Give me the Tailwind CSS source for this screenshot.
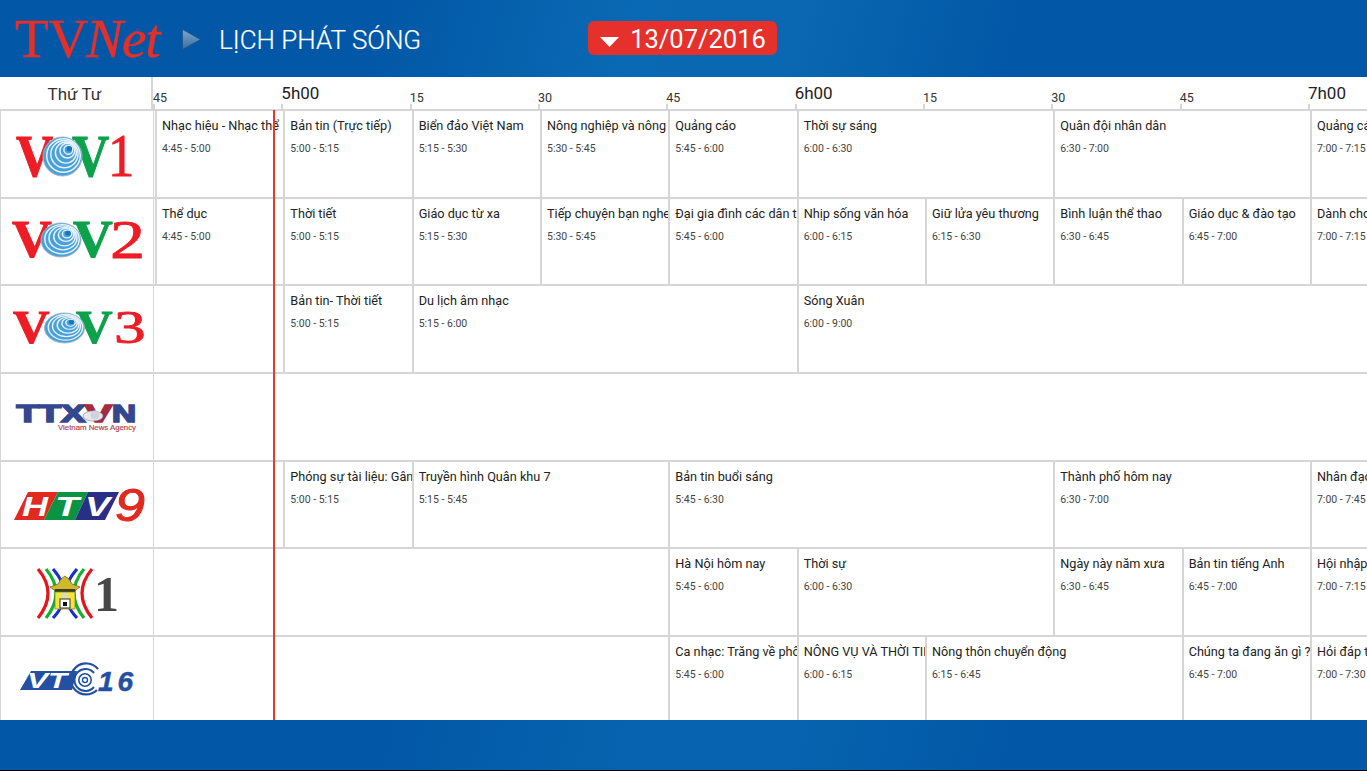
<!DOCTYPE html>
<html lang="vi">

<head>
    <meta charset="UTF-8">
    <meta name="viewport" content="width=device-width, initial-scale=1.0">
    <title>TVNet - Lịch phát sóng</title>
    <script src="https://cdn.jsdelivr.net/npm/@tailwindcss/browser@4"></script>
</head>

<body class="bg-black [font-family:Roboto,sans-serif]">
    <div class="relative w-[1367px] h-[770px] overflow-hidden flex flex-col bg-white">

        <!-- Top bar -->
        <header class="h-[77px] flex-none flex items-center bg-[linear-gradient(105deg,#0258a6_28%,#0a69b4_46%,#0a67b2_58%,#0258a6_74%)]">
            <div class="ml-[15px] w-[145px] whitespace-nowrap [font-family:'Liberation_Serif',serif] text-[55px] leading-[60px] text-[#e5302a] [-webkit-text-stroke:0.5px_#e5302a]">TV<span class="italic -ml-[2px] tracking-[-1px]">Net</span></div>
            <svg class="ml-[22px] mt-[1px]" width="19" height="21" viewBox="0 0 19 21">
                <defs>
                    <linearGradient id="arrow" x1="0" y1="0" x2="0" y2="1">
                        <stop offset="0" stop-color="#7fa8cf" />
                        <stop offset="1" stop-color="#3a6c9c" />
                    </linearGradient>
                </defs>
                <path d="M0.5 0.5 L18.5 10.5 L0.5 20.5 Z" fill="url(#arrow)" stroke="#1f4f86" stroke-width="0.7" />
            </svg>
            <h1 class="ml-[18px] mt-[2px] text-[26px] leading-none font-light text-white [-webkit-text-stroke:0.2px_#fff]">LỊCH PHÁT SÓNG</h1>
            <div class="ml-[167px] -mt-[1px] w-[189px] h-[34px] rounded-[6px] bg-[#e5302c] flex items-center text-white">
                <svg class="ml-[12px] mt-[8px]" width="19" height="10" viewBox="0 0 19 10">
                    <path d="M0 0 H19 L9.5 10 Z" fill="#fff" />
                </svg>
                <span class="ml-[11px] mt-[3px] text-[25.5px] leading-none">13/07/2016</span>
            </div>
        </header>

        <!-- Time ruler -->
        <div id="ruler" class="h-[32px] flex-none flex overflow-hidden bg-white">
            <div class="w-[153px] flex-none pr-[2px] border-r-2 border-[#d6d6d6] text-center text-[17px] leading-[35px] text-[#333]">Thứ Tư</div>
        </div>

        <!-- Channel rows -->
        <div id="rows" class="h-[611px] flex-none overflow-hidden"></div>

        <!-- Now marker -->
        <div class="absolute left-[273px] top-[110px] w-[2px] h-[610px] bg-[#e53935]"></div>

        <!-- Bottom bar -->
        <footer class="h-[50px] flex-none bg-[linear-gradient(105deg,#0258a6_28%,#0763af_46%,#0763af_58%,#0258a6_74%)]"></footer>
    </div>

    <script>
        const QUARTER = 128.33;

        // Globe with rings, shared by the VOV logos
        const rings = function (cx, cy, rx, ry) {
            return `<g transform="translate(${cx} ${cy}) scale(${rx / 20} ${ry / 20})">
                <circle r="20" fill="#4aa0d8" stroke="#9fb4c4" stroke-width="1"/>
                <g fill="none" stroke="#e6f3fb" stroke-width="1.5">
                    <circle cx="1" cy="-1" r="17.2"/>
                    <circle cx="2" cy="-2.5" r="14"/>
                    <circle cx="3.5" cy="-4" r="10.8"/>
                    <circle cx="5" cy="-6" r="7.6"/>
                    <circle cx="6" cy="-7" r="4.6"/>
                </g>
                <circle cx="7" cy="-8" r="2.8" fill="#1576c4"/>
            </g>`;
        };

        const vov = function (num, o) {
            return `<svg width="153" height="86" viewBox="0 0 153 86">
                <g font-family="Liberation Serif" font-weight="700" stroke-width="1">
                    <text transform="translate(${o.redX} ${o.base}) scale(${o.sx} 1)" font-size="${o.size}" fill="#ee1c25" stroke="#ee1c25">V</text>
                    <text transform="translate(${o.greenX} ${o.base}) scale(${o.sx} 1)" font-size="${o.size}" fill="#0ca14a" stroke="#0ca14a">V</text>
                </g>
                ${rings(o.cx, o.cy, o.rx, o.ry)}
                <text transform="translate(${o.numX} ${o.numBase}) scale(${o.numSx} 1)" font-family="Liberation Serif" font-size="${o.numSize}" fill="#ee1c25" stroke="#ee1c25" stroke-width="0.8">${num}</text>
            </svg>`;
        };

        const logos = {
            vov1: vov("1", { redX: 15, greenX: 71, base: 65, size: 60, sx: 0.86, cx: 61.5, cy: 45.5, rx: 19.5, ry: 19.5, numX: 107, numBase: 65, numSize: 62, numSx: 0.85 }),
            vov2: vov("2", { redX: 11, greenX: 72, base: 58, size: 52, sx: 1.06, cx: 60, cy: 41, rx: 20, ry: 17, numX: 109, numBase: 59, numSize: 54, numSx: 1.3 }),
            vov3: vov("3", { redX: 12, greenX: 75, base: 57, size: 46, sx: 1.1, cx: 63.5, cy: 42, rx: 20, ry: 15, numX: 113, numBase: 57, numSize: 46, numSx: 1.38 }),
            ttxvn: `<svg width="153" height="86" viewBox="0 0 153 86">
                <g font-family="Liberation Sans" font-weight="700" font-size="23" stroke-width="1.6">
                    <text x="15.5" y="47.5" textLength="69" lengthAdjust="spacingAndGlyphs" fill="#35478f" stroke="#35478f">TTX</text>
                    <text x="84" y="47.5" textLength="27" lengthAdjust="spacingAndGlyphs" fill="#a8283c" stroke="#a8283c">V</text>
                    <text x="111" y="47.5" textLength="24" lengthAdjust="spacingAndGlyphs" fill="#35478f" stroke="#35478f">N</text>
                </g>
                <ellipse cx="92" cy="42" rx="10" ry="5" fill="#e6e8ee" stroke="#8d95b4" stroke-width="0.7"/>
                <circle cx="94" cy="41" r="4.5" fill="#cfd3de"/>
                <text x="57" y="56" textLength="78" lengthAdjust="spacingAndGlyphs" font-family="Liberation Sans" font-size="6.5" fill="#b3434f" stroke="#b3434f" stroke-width="0.15">Vietnam News Agency</text>
            </svg>`,
            htv9: `<svg width="153" height="86" viewBox="0 0 153 86">
                <path d="M27 30 H57 L43 58 H13 Z" fill="#e0291f"/>
                <path d="M57 30 H87 L74 58 H43 Z" fill="#0b9344"/>
                <path d="M87 30 H118 L104 58 H74 Z" fill="#2a2f86"/>
                <g font-family="Liberation Sans" font-weight="700" font-style="italic" font-size="28" fill="#fff">
                    <text x="21" y="54" textLength="26" lengthAdjust="spacingAndGlyphs">H</text>
                    <text x="54" y="54" textLength="24" lengthAdjust="spacingAndGlyphs">T</text>
                    <text x="84" y="54" textLength="25" lengthAdjust="spacingAndGlyphs">V</text>
                </g>
                <text x="114" y="59" font-family="Liberation Sans" font-style="italic" font-size="46" fill="#e0291f" stroke="#e0291f" stroke-width="1" textLength="30" lengthAdjust="spacingAndGlyphs">9</text>
            </svg>`,
            h1: `<svg width="153" height="86" viewBox="0 0 153 86">
                <g fill="none" stroke-width="3.2">
                    <path d="M37 20 Q57 44 37 69 M91 20 Q71 44 91 69" stroke="#e8141c"/>
                    <path d="M45 20 Q65 44 45 69 M83 20 Q63 44 83 69" stroke="#18b030"/>
                    <path d="M52 20 Q64 34 60 40 M60 50 Q64 56 52 69 M76 20 Q64 34 68 40 M68 50 Q64 56 76 69" stroke="#1a2fd0"/>
                </g>
                <path d="M49 38 L57 35 L60 30 L64 27 L68 30 L71 35 L79 38 L75 41 H53 Z" fill="#cdbb2c" stroke="#5e5a24" stroke-width="0.7"/>
                <rect x="54" y="40" width="20" height="3" fill="#3e3c22"/>
                <rect x="54" y="43" width="20" height="17" fill="#f2e63a" stroke="#7b7428" stroke-width="0.7"/>
                <rect x="61" y="44" width="6" height="5" fill="#d9d9c8"/>
                <rect x="59" y="50" width="10" height="9" fill="#fff" stroke="#333" stroke-width="1"/>
                <rect x="62" y="53" width="4" height="4" fill="#111"/>
                <text x="93" y="62" font-family="Liberation Serif" font-weight="700" font-size="50" fill="#474747">1</text>
            </svg>`,
            vtc16: `<svg width="153" height="86" viewBox="0 0 153 86">
                <path d="M30 34 H76 L71 53 H19 Z" fill="#2450a4"/>
                <g font-family="Liberation Sans" font-weight="700" font-style="italic" font-size="22" fill="#fff">
                    <text x="26" y="51" textLength="21" lengthAdjust="spacingAndGlyphs">V</text>
                    <text x="47" y="51" textLength="19" lengthAdjust="spacingAndGlyphs">T</text>
                </g>
                <g fill="none" stroke="#2450a4" transform="translate(84 43)">
                    <path d="M13 -11 A15.5 15.5 0 1 0 12 10" stroke-width="2.2" />
                    <path d="M9 -7 A11 11 0 1 0 9 7" stroke-width="2" />
                    <circle r="6.2" stroke-width="1.6" />
                    <circle r="2.5" stroke-width="1.4" />
                </g>
                <text x="97" y="54" font-family="Liberation Sans" font-weight="700" font-style="italic" font-size="28" letter-spacing="4" fill="#2450a4" stroke="#2450a4" stroke-width="0.5">16</text>
            </svg>`
        };

        // Start and end are counted in quarters of an hour after 4:45
        const schedule = [
            {
                logo: "vov1", programs: [
                    [0, 1, "Nhạc hiệu - Nhạc thể"], [1, 2, "Bản tin (Trực tiếp)"], [2, 3, "Biển đảo Việt Nam"],
                    [3, 4, "Nông nghiệp và nông thôn"], [4, 5, "Quảng cáo"], [5, 7, "Thời sự sáng"],
                    [7, 9, "Quân đội nhân dân"], [9, 10, "Quảng cáo"]
                ]
            },
            {
                logo: "vov2", programs: [
                    [0, 1, "Thể dục"], [1, 2, "Thời tiết"], [2, 3, "Giáo dục từ xa"], [3, 4, "Tiếp chuyện bạn nghe đài"],
                    [4, 5, "Đại gia đình các dân tộc"], [5, 6, "Nhịp sống văn hóa"], [6, 7, "Giữ lửa yêu thương"],
                    [7, 8, "Bình luận thể thao"], [8, 9, "Giáo dục & đào tạo"], [9, 10, "Dành cho"]
                ]
            },
            {
                logo: "vov3", programs: [
                    [1, 2, "Bản tin- Thời tiết"], [2, 5, "Du lịch âm nhạc"], [5, 17, "Sóng Xuân"]
                ]
            },
            { logo: "ttxvn", programs: [] },
            {
                logo: "htv9", programs: [
                    [1, 2, "Phóng sự tài liệu: Gân guốc"], [2, 4, "Truyền hình Quân khu 7"], [4, 7, "Bản tin buổi sáng"],
                    [7, 9, "Thành phố hôm nay"], [9, 12, "Nhân đạo"]
                ]
            },
            {
                logo: "h1", programs: [
                    [4, 5, "Hà Nội hôm nay"], [5, 7, "Thời sự"], [7, 8, "Ngày này năm xưa"],
                    [8, 9, "Bản tin tiếng Anh"], [9, 10, "Hội nhập"]
                ]
            },
            {
                logo: "vtc16", programs: [
                    [4, 5, "Ca nhạc: Trăng về phố"], [5, 6, "NÔNG VỤ VÀ THỜI TIẾT"], [6, 8, "Nông thôn chuyển động"],
                    [8, 9, "Chúng ta đang ăn gì ?"], [9, 11, "Hỏi đáp thuế"]
                ]
            }
        ];

        const clock = function (quarter) {
            const minutes = 4 * 60 + 45 + quarter * 15;
            const m = minutes % 60;
            return Math.floor(minutes / 60) + ":" + (m < 10 ? "0" + m : m);
        };

        // Ruler labels
        const ruler = document.getElementById("ruler");
        ["45", "5h00", "15", "30", "45", "6h00", "15", "30", "45", "7h00"].forEach(function (label) {
            const isHour = label.indexOf("h") > 0;
            const cell = document.createElement("div");
            cell.className = "flex-none flex flex-col justify-end";
            cell.style.width = QUARTER + "px";
            const text = document.createElement("div");
            text.className = isHour
                ? "mb-[1px] text-[17px] leading-[20px] text-[#222]"
                : "-mb-[2px] text-[12.5px] leading-[16px] text-[#333]";
            text.textContent = label;
            const tick = document.createElement("div");
            tick.className = "w-[2px] h-[5px] bg-[#d6d6d6]";
            cell.appendChild(text);
            cell.appendChild(tick);
            ruler.appendChild(cell);
        });

        // Channel rows
        const rows = document.getElementById("rows");
        schedule.forEach(function (channel) {
            const row = document.createElement("div");
            row.className = "h-[87.67px] flex border-t-2 border-[#d6d6d6] overflow-hidden";

            const logo = document.createElement("div");
            logo.className = "w-[154px] flex-none border-x border-[#d6d6d6] overflow-hidden -mr-[1px]";
            logo.innerHTML = logos[channel.logo];
            row.appendChild(logo);

            let cursor = 0;
            channel.programs.forEach(function (p) {
                const box = document.createElement("div");
                box.className = "flex-none h-full border-l-2 border-[#d6d6d6] pl-[5px] pt-[7px] overflow-hidden whitespace-nowrap";
                box.style.width = (p[1] - p[0]) * QUARTER + "px";
                box.style.marginLeft = (p[0] - cursor) * QUARTER + (cursor === 0 ? 2 : 0) + "px";
                box.innerHTML = '<div class="text-[12.7px] leading-[16px] text-[#222]"></div>' +
                    '<div class="mt-[8px] text-[10.5px] leading-[14px] text-[#444]"></div>';
                box.children[0].textContent = p[2];
                box.children[1].textContent = clock(p[0]) + " - " + clock(p[1]);
                row.appendChild(box);
                cursor = p[1];
            });

            rows.appendChild(row);
        });
    </script>
</body>

</html>
